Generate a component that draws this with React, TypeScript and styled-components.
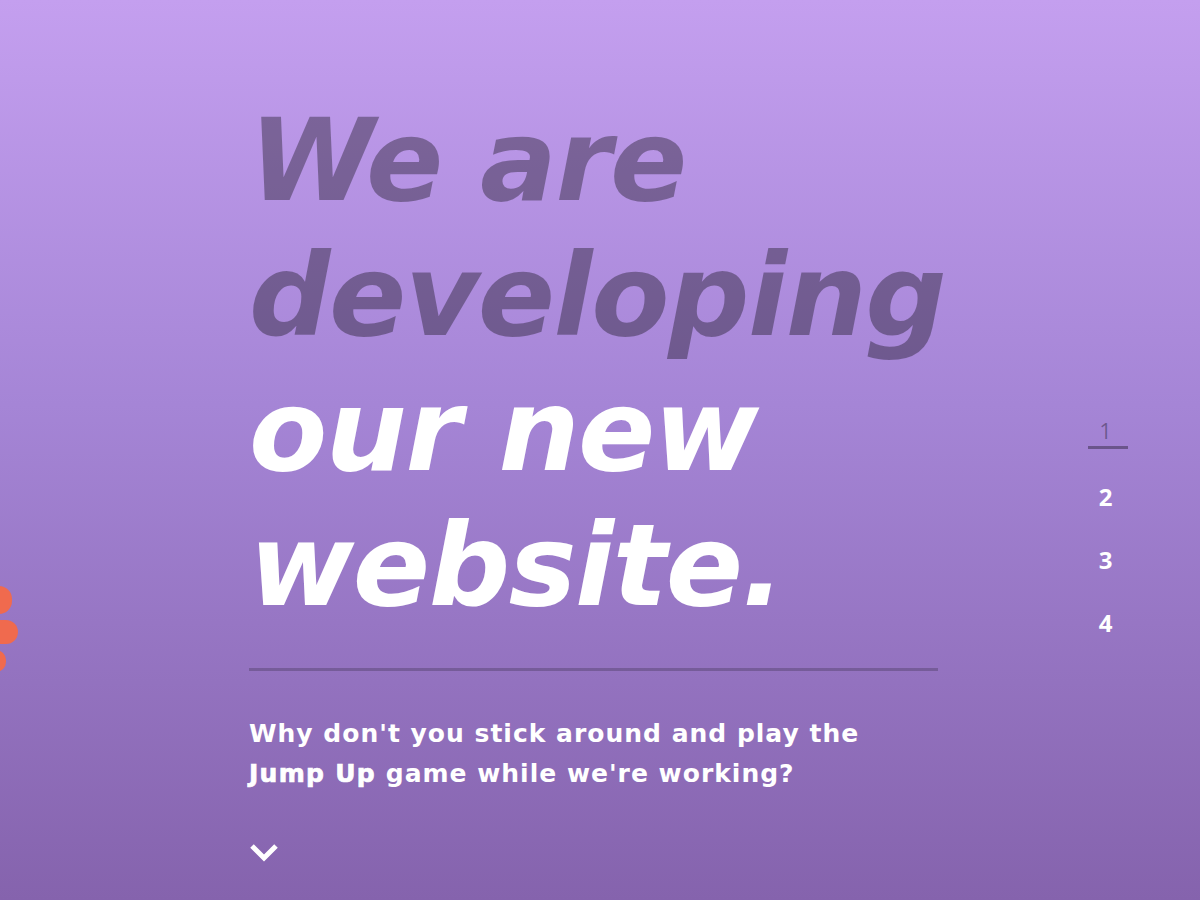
import React from "react";
import styled, { createGlobalStyle } from "styled-components";

const Global = createGlobalStyle`
  html, body { margin: 0; padding: 0; }
  body { font-family: "DejaVu Sans", "Open Sans", sans-serif; }
`;

const Page = styled.div`
  position: relative;
  width: 1200px;
  height: 900px;
  overflow: hidden;
  background: linear-gradient(180deg, #c49fef 0%, #a585d6 45%, #8563ad 100%);
  display: flex;
`;

const Main = styled.main`
  flex: 1;
  padding: 93px 0 0 249px;
  display: flex;
  flex-direction: column;
  align-items: flex-start;
`;

const Heading = styled.h1`
  margin: 0;
  font-family: "DejaVu Sans", sans-serif;
  font-style: italic;
  font-weight: 700;
  font-size: 114px;
  line-height: 135px;
  letter-spacing: -1.5px;
`;

const Line = styled.span<{ $light?: boolean }>`
  display: block;
  color: ${(p) => (p.$light ? "#ffffff" : "rgba(0, 0, 0, 0.34)")};
`;

const Divider = styled.hr`
  margin: 35px 0 0;
  width: 689px;
  height: 3px;
  border: 0;
  background: rgba(0, 0, 0, 0.2);
`;

const Lead = styled.p`
  margin: 43px 0 0;
  color: #fff;
  font-family: "DejaVu Sans", sans-serif;
  font-weight: 700;
  font-size: 25px;
  line-height: 40px;
  letter-spacing: 1px;
`;

const Strong = styled.b`
  font-weight: 700;
  letter-spacing: 1.3px;
  -webkit-text-stroke: 0.7px #fff;
`;

const Chevron = styled.svg`
  display: block;
  margin-top: 48px;
  width: 30px;
  height: 20px;
`;

const Nav = styled.nav`
  width: 40px;
  margin: 414px 72px 0 0;
  display: flex;
  flex-direction: column;
  align-items: center;
  gap: 28px;
`;

const NavItem = styled.a<{ $active?: boolean }>`
  display: block;
  box-sizing: border-box;
  width: 40px;
  padding-right: 5px;
  text-align: center;
  font-family: "Open Sans", sans-serif;
  font-weight: ${(p) => (p.$active ? 500 : 700)};
  font-size: ${(p) => (p.$active ? 22 : 24)}px;
  line-height: 32px;
  color: ${(p) => (p.$active ? "rgba(0,0,0,0.34)" : "#fff")};
  border-bottom: 3px solid ${(p) => (p.$active ? "rgba(0,0,0,0.34)" : "transparent")};
  margin-bottom: ${(p) => (p.$active ? 4 : 0)}px;
  text-decoration: none;
`;

const Blobs = styled.div`
  position: absolute;
  left: -14px;
  top: 586px;
  display: flex;
  flex-direction: column;
  gap: 6px;
`;

const Blob = styled.span<{ $w: number; $h: number }>`
  display: block;
  width: ${(p) => p.$w}px;
  height: ${(p) => p.$h}px;
  border-radius: 14px;
  background: #f06a4e;
  filter: blur(0.7px);
`;

export default function App() {
  return (
    <>
      <Global />
      <Page>
        <Blobs>
          <Blob $w={26} $h={28} />
          <Blob $w={32} $h={24} />
          <Blob $w={20} $h={22} />
        </Blobs>
        <Main>
          <Heading>
            <Line>We are</Line>
            <Line>developing</Line>
            <Line $light>our new</Line>
            <Line $light>website.</Line>
          </Heading>
          <Divider />
          <Lead>
            Why don't you stick around and play the
            <br />
            <Strong>Jump Up</Strong> game while we're working?
          </Lead>
          <Chevron viewBox="0 0 30 20">
            <polyline points="3,4 15,16 27,4" fill="none" stroke="#fff" strokeWidth="5" />
          </Chevron>
        </Main>
        <Nav>
          <NavItem $active>1</NavItem>
          <NavItem>2</NavItem>
          <NavItem>3</NavItem>
          <NavItem>4</NavItem>
        </Nav>
      </Page>
    </>
  );
}
